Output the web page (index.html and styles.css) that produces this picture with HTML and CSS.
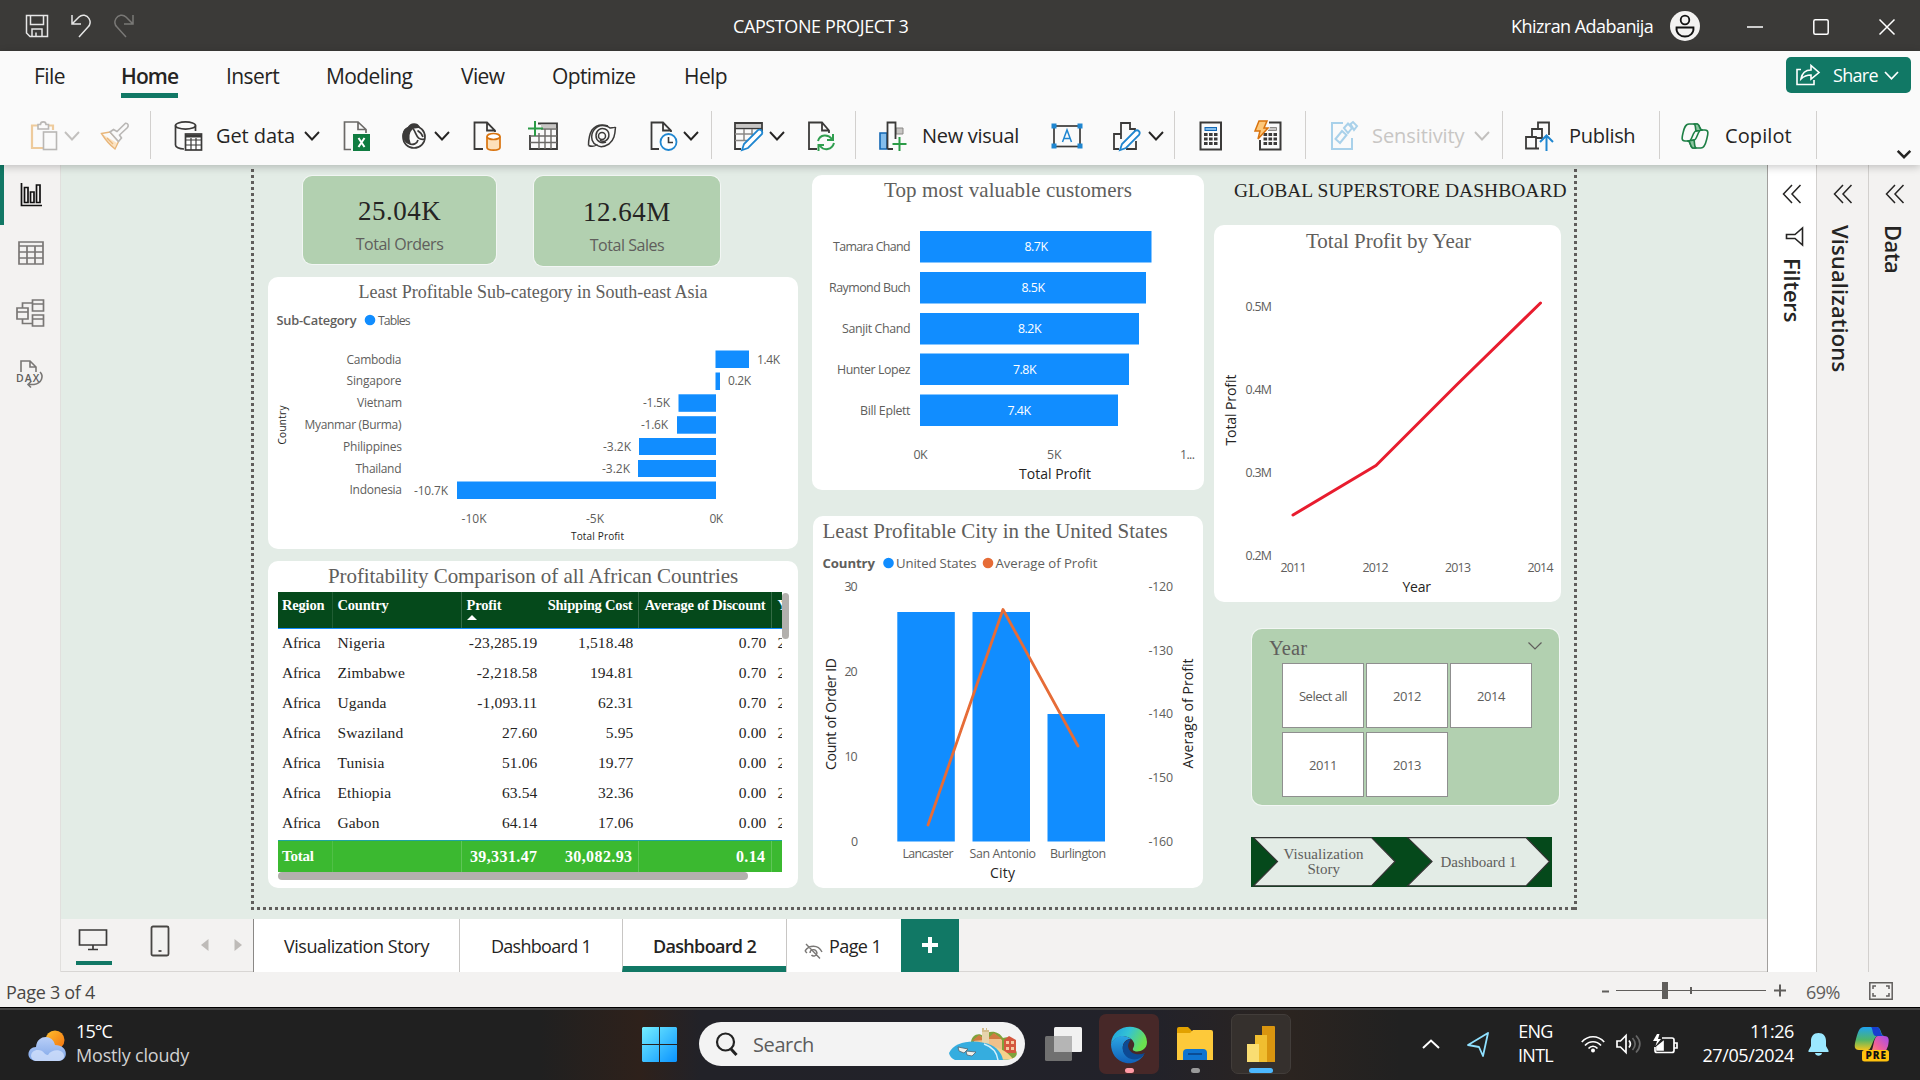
FILE: index.html
```html
<!DOCTYPE html>
<html lang="en">
<head>
<meta charset="utf-8">
<title>CAPSTONE PROJECT 3</title>
<link rel="stylesheet" href="styles.css">
</head>
<body>
<header class="titlebar">
  <div class="quick">
    <svg width="24" height="24" viewBox="0 0 24 24" fill="none" stroke="#e6e6e6" stroke-width="1.500"><path d="M1.500 1.500H22.500V22.500H5L1.500 19Z"/><path d="M5.500 1.500V10.500H18.500V1.500M7 22.500V15H17V22.500M11 18.500V22"/></svg>
    <svg width="22" height="24" viewBox="0 0 22 24" fill="none" stroke="#e6e6e6" stroke-width="1.500"><path d="M2 1V10H11M2 10L9 3C12 0 17 1 19 4.500C21 8 20 11 18 13L9 23"/></svg>
    <svg class="dim" width="22" height="24" viewBox="0 0 22 24" fill="none" stroke="#8a8886" stroke-width="1.500"><path d="M20 1V10H11M20 10L13 3C10 0 5 1 3 4.500C1 8 2 11 4 13L13 23"/></svg>
  </div>
  <div class="doc-name">CAPSTONE PROJECT 3</div>
  <div class="user">Khizran Adabanija</div>
  <svg class="avatar" width="30" height="30" viewBox="0 0 30 30"><circle cx="15" cy="15" r="15" fill="#f3f2f1"/><g fill="none" stroke="#111" stroke-width="1.800"><circle cx="15" cy="9" r="4.300"/><path d="M6.500 16.500H23.500C24 22 20 25.500 15 25.500S6 22 6.500 16.500Z"/></g></svg>
  <svg class="win" width="16" height="16" viewBox="0 0 16 16" stroke="#fff" stroke-width="1.500" fill="none"><path d="M0 8H16"/></svg>
  <svg class="win" width="16" height="16" viewBox="0 0 16 16" stroke="#fff" stroke-width="1.500" fill="none"><rect x=".8" y=".8" width="14.400" height="14.400" rx="1.500"/></svg>
  <svg class="win" width="16" height="16" viewBox="0 0 16 16" stroke="#fff" stroke-width="1.500" fill="none"><path d="M.5 .5L15.500 15.500M15.500 .5L.5 15.500"/></svg>
</header>

<section class="ribbon">
  <nav class="menu">
    <a>File</a><a class="active">Home</a><a>Insert</a><a>Modeling</a><a>View</a><a>Optimize</a><a>Help</a>
    <button class="share">
      <svg width="24" height="22" viewBox="0 0 24 22" fill="none" stroke="#fff" stroke-width="1.600"><path d="M5 5.500H1V20.500H18V16"/><path d="M5 15C6 9 10 6 15 6V1.500L23 8.500L15 15V11C11 11 8 12 5 15Z"/></svg>
      <span>Share</span>
      <svg width="15" height="9" viewBox="0 0 15 9" fill="none" stroke="#fff" stroke-width="1.700"><path d="M1 1L7.500 7.800L14 1"/></svg>
    </button>
  </nav>
  <div class="tools">
    <svg class="ic" viewBox="0 0 30 30" fill="none" stroke-width="1.600"><path d="M8 4.500H2V27H13M18 4.500H23V9" stroke="#eecb9c" stroke-width="2.200"/><path d="M8 3.500H10.500C10.500 0 16 0 16 3.500H18.500V8H8Z" stroke="#b9b7b5"/><rect x="13.500" y="11" width="13" height="17.500" stroke="#b9b7b5"/></svg>
    <svg class="chev pale" viewBox="0 0 16 10"><path d="M1 1L8 8.500L15 1"/></svg>
    <svg class="ic" viewBox="0 0 30 30" fill="none"><path d="M2 13L17 22L14.500 27.500Z" fill="#fbe3c3"/><path d="M1.500 12.500L10 11L18.500 20.500L15 28C10 24 5 18 1.500 12.500ZM7 17L13 23" stroke="#e9b679" stroke-width="1.400"/><path d="M10 11L13.500 8.500L17 10.500L25.500 2.200C28 2 29 4.500 27.500 6.500L19.500 14L21.500 17L18.500 20.500Z" fill="#fafafa" stroke="#b9b7b5" stroke-width="1.600"/></svg>
    <i class="sep"></i>
    <svg class="ic" viewBox="0 0 30 30" fill="none" stroke="#3b3a39" stroke-width="1.700"><ellipse cx="13.500" cy="4.500" rx="10" ry="3.600"/><path d="M3.500 4.500V24C3.500 26 7 28 12 28M23.500 4.500V10"/><rect x="13.500" y="13" width="16" height="16" fill="#fff"/><path d="M13.500 15H29.500" stroke-width="3"/><path d="M13.500 19H29.500M13.500 24H29.500M19 17V29M24 17V29" stroke-width="1.200"/></svg>
    <span class="ls0">Get data</span>
    <svg class="chev" viewBox="0 0 16 10"><path d="M1 1L8 8.500L15 1"/></svg>
    <svg class="ic" viewBox="0 0 30 30" fill="none"><path d="M9 28.500H2.500V1H16L24 8.500V12M16 1V8.500H24" stroke="#6b6967" stroke-width="1.700"/><rect x="11" y="13" width="17" height="17" fill="#107c41"/><path d="M16.500 17L22.500 26M22.500 17L16.500 26" stroke="#fff" stroke-width="2"/></svg>
    <svg class="ic" viewBox="0 0 30 30" fill="none" stroke="#3b3a39" stroke-width="1.700"><circle cx="15" cy="16" r="11"/><path d="M9.500 6.500C12 2 18 2 20 6L13.500 7C9.500 11 8.500 17 11 23C6.500 22 4 17 4.500 12.500C5 9.500 7 7.500 9.500 6.500Z" fill="#3b3a39"/><path d="M13.500 7C18 12 17 20 26 18M11 23C14 24 18 23 19 19M18.500 9.500C21 11 23 13 24 16"/></svg>
    <svg class="chev" viewBox="0 0 16 10"><path d="M1 1L8 8.500L15 1"/></svg>
    <svg class="ic" viewBox="0 0 30 30" fill="none"><path d="M11 28H2.500V1.500H15L23 9.500V11M15 1.500V9.500H23" stroke="#3b3a39" stroke-width="1.800"/><path d="M15 15.500V26.500C15 30 28 30 28 26.500V15.500" fill="#fde0b8" stroke="#d9730d" stroke-width="1.700"/><ellipse cx="21.500" cy="15.500" rx="6.500" ry="3" fill="#fff" stroke="#d9730d" stroke-width="1.700"/></svg>
    <svg class="ic" viewBox="0 0 30 30" fill="none"><path d="M10 2.500H29V28H2V14" stroke="#3b3a39" stroke-width="1.800"/><path d="M13 3.500H28V7H13Z" fill="#c8c6c4"/><path d="M13 8H29M2 15H29M2 21.500H29M11 12V28M17 8V28M23 8V28" stroke="#6b6967" stroke-width="1.400"/><path d="M7 0V15M0 7.500H15" stroke="#2b9b46" stroke-width="2"/></svg>
    <svg class="ic" viewBox="0 0 30 30" fill="none" stroke="#3b3a39" stroke-width="1.500"><circle cx="15" cy="15" r="3.500"/><path d="M19 21C14 23 9 20 9 14.500C9 9 14 6.500 18 8C23 10 23 17 19 19.500C17.500 20.500 14.500 20.500 13 19"/><path d="M1.500 24.500C5 26 8 25 9.500 24C5 22 4 17 5 13C7 6 13 3.500 19 5C21 5.500 22 6 23 7C25 6.500 27 7 28.500 6"/><path d="M28.500 6C28 14 27 19 22 23C17 26 12 26 9.500 24M1.500 24.500C1.500 19 2 14 5 9C9 4 15 3 21 5"/></svg>
    <svg class="ic" viewBox="0 0 30 30" fill="none"><path d="M11 28H3.500V1.500H15L23 9.500V11M15 1.500V9.500H23" stroke="#3b3a39" stroke-width="1.800"/><circle cx="20.500" cy="21" r="8" fill="#fff" stroke="#1f86d0" stroke-width="1.800"/><path d="M20.500 16V21.500H25" stroke="#3b3a39" stroke-width="1.600"/></svg>
    <svg class="chev" viewBox="0 0 16 10"><path d="M1 1L8 8.500L15 1"/></svg>
    <i class="sep"></i>
    <svg class="ic" viewBox="0 0 30 30" fill="none"><path d="M8 28H2V2H29V12" stroke="#3b3a39" stroke-width="1.800"/><path d="M3 3H28V6.500H3Z" fill="#c8c6c4"/><path d="M2 7.500H29" stroke="#3b3a39" stroke-width="1.500"/><path d="M2 13H20M2 19.500H14M11 8V20M19 8V14" stroke="#8a8886" stroke-width="1.500"/><path d="M9 29L11 23L25 9C28 8 30 10 29 13L15 27Z" fill="#fff" stroke="#1f86d0" stroke-width="1.800"/></svg>
    <svg class="chev" viewBox="0 0 16 10"><path d="M1 1L8 8.500L15 1"/></svg>
    <svg class="ic" viewBox="0 0 30 30" fill="none"><path d="M10 28H2V1.500H15L22 9.500V12M15 1.500V9.500H22" stroke="#3b3a39" stroke-width="1.800"/><path d="M11 20C13 13 21 13 25 18M26 13V19H20M27 22C25 29 17 30 13 25M11.500 30V24H17" stroke="#2f9e4f" stroke-width="2"/></svg>
    <i class="sep"></i>
    <svg class="ic" viewBox="0 0 30 30" fill="none"><path d="M2 12H9V28H2Z" fill="#83bdec" stroke="#1267b4" stroke-width="1.600"/><path d="M18 7H25V13H18Z" fill="#c8c6c4" stroke="#8a8886"/><path d="M9.500 28V1.500H17.500V18M9.500 28H15" stroke="#3b3a39" stroke-width="1.800"/><path d="M21.500 16V30M14.500 23H28.500" stroke="#2b9b46" stroke-width="2"/></svg>
    <span>New visual</span>
    <svg class="ic wide" viewBox="0 0 32 30" fill="none"><rect x="3" y="5" width="26" height="20.500" stroke="#3b3a39" stroke-width="1.700"/><path d="M11.500 21L16 9L20.500 21M13 17.500H19" stroke="#1f86d0" stroke-width="1.500"/><path d="M.5 2.500H5.500V7.500H.5ZM26.500 2.500H31.500V7.500H26.500ZM.5 22.500H5.500V27.500H.5ZM26.500 22.500H31.500V27.500H26.500Z" fill="#1f86d0"/></svg>
    <svg class="ic" viewBox="0 0 30 30" fill="none"><path d="M7 28H2V13H9M9 18V2H18V9M18 8H23V11M24 20V28H14" stroke="#3b3a39" stroke-width="1.800"/><path d="M8 29L10 23L23 10C26 8 29 11 27 14L14 27Z" fill="#fff" stroke="#1f86d0" stroke-width="1.800"/></svg>
    <svg class="chev" viewBox="0 0 16 10"><path d="M1 1L8 8.500L15 1"/></svg>
    <i class="sep"></i>
    <svg class="ic" viewBox="0 0 30 30" fill="none"><rect x="2.500" y="1.500" width="20.500" height="27" stroke="#3b3a39" stroke-width="2"/><rect x="7" y="6.500" width="11.500" height="3" fill="#83bdec" stroke="#1267b4"/><path d="M6 13.500H19.500M6 18H19.500M6 22.500H19.500" stroke="#3b3a39" stroke-width="3" stroke-dasharray="3.600 1.400"/></svg>
    <svg class="ic" viewBox="0 0 30 30" fill="none"><path d="M15 1.500H26.500V28.500H6V19" stroke="#3b3a39" stroke-width="2"/><path d="M16 6.500H22.500V9.500H14" fill="#c8c6c4" stroke="#8a8886"/><path d="M9.500 13.500H23M9.500 18H23M9.500 22.500H23" stroke="#3b3a39" stroke-width="3" stroke-dasharray="3.600 1.400"/><path d="M5 0H13L10 7H14L4 18L6 10H1Z" fill="#fdc87a" stroke="#d9730d" stroke-width="1.500"/></svg>
    <i class="sep"></i>
    <svg class="ic" viewBox="0 0 30 30" fill="none" stroke="#a9d1ea" stroke-width="2"><path d="M14 2H3V28H23V17"/><path d="M6.500 18L13 10L17.500 14L11 22Z"/><path d="M15 7L19 2.500L23 7L19 12ZM21.500 3L24 1L28 5L25 9Z"/></svg>
    <span class="off ls0">Sensitivity</span>
    <svg class="chev pale" viewBox="0 0 16 10"><path d="M1 1L8 8.500L15 1"/></svg>
    <i class="sep"></i>
    <svg class="ic" viewBox="0 0 30 30" fill="none" stroke="#3b3a39" stroke-width="1.800"><path d="M15 27.500H2V16H12V27M8 16V8H18V17H12M14 8V1.500H25V14"/><path d="M22.500 30V15M16 21L22.500 14.500L29 21" stroke="#1f86d0" stroke-width="2"/></svg>
    <span>Publish</span>
    <i class="sep"></i>
    <svg class="ic" viewBox="0 0 30 30" fill="none" stroke="#1d7f45" stroke-width="1.600" stroke-linejoin="round"><path d="M9 3H17C20 3 19 9 22 9L16 10C13 10 12 20 9 20H5C1 20 2 16 3 12C4 8 5 3 9 3Z"/><path d="M14 3H17C20 3 19 9 22 9L16 10C15 6 16 4 14 3Z" fill="#8cc7a1"/><path d="M21 27H13C10 27 11 20 8 20L14 19C17 19 18 9 21 9H25C29 9 28 13 27 17C26 21 25 27 21 27Z"/><path d="M16 27H13C10 27 11 20 8 20L14 19C15 23 14 26 16 27Z" fill="#8cc7a1"/></svg>
    <span class="lsp">Copilot</span>
    <i class="sep"></i>
    <svg class="chev collapse" viewBox="0 0 16 10"><path d="M1 1L8 8L15 1"/></svg>
  </div>
</section>

<main class="work">
  <aside class="rail">
    <svg class="on" width="22" height="24" viewBox="0 0 22 24" fill="none" stroke="#111" stroke-width="1.700"><path d="M1.500 0V22.500H22M4.500 4.500H8V19.500H4.500ZM10.500 9H14V19.500H10.500ZM16.500 2H20V19.500H16.500Z"/></svg>
    <svg width="26" height="24" viewBox="0 0 26 24" fill="none" stroke="#797775" stroke-width="1.700"><path d="M1 1H25V23H1ZM1 5H25M1 11H25M1 17H25M9 5V23M17 5V23"/></svg>
    <svg width="29" height="28" viewBox="0 0 29 28" fill="none" stroke="#797775" stroke-width="1.700"><path d="M16.500 1H27.500V12H16.500ZM16.500 5H27.500M1 9H12V20H1ZM1 13H12M16.500 16H27.500V27H16.500ZM16.500 20H27.500M6.500 9V4H16.500M6.500 20V24.500H16.500"/></svg>
    <svg class="dax" width="28" height="28" viewBox="0 0 28 28" fill="none" stroke="#797775" stroke-width="1.600"><path d="M5 12V1H14L20 7V12M14 1V7H20M24 12C28 16 26 23 18 24.500H12M15 21.500L12 24.500L15 27.500"/><text x="0" y="22" font-size="10.500" font-weight="600" stroke="none" fill="#605e5c" textLength="23">DAX</text></svg>
  </aside>

  <div class="canvas">
    <div class="page">
      <div class="col-a">
        <div class="kpis">
          <div class="kpi one"><b>25.04K</b><span>Total Orders</span></div>
          <div class="kpi two"><b>12.64M</b><span>Total Sales</span></div>
        </div>
        <section class="card asia">
          <h2>Least Profitable Sub-category in South-east Asia</h2>
          <svg width="530" height="240" viewBox="268 309 530 240" class="chart">
            <text x="276.500" y="324.500" font-size="12.800" font-weight="600" textLength="80">Sub-Category</text>
            <circle cx="370" cy="320" r="5.300" fill="#118dff"/><text x="378" y="324.500" font-size="12.300" textLength="32.500">Tables</text>
            <g font-size="12">
              <text x="346.500" y="364" textLength="55">Cambodia</text><text x="346.500" y="385" textLength="55">Singapore</text><text x="357" y="407" textLength="45">Vietnam</text><text x="304.500" y="429" textLength="97">Myanmar (Burma)</text><text x="343" y="451" textLength="59">Philippines</text><text x="355.500" y="473" textLength="46">Thailand</text><text x="349.500" y="494" textLength="52.500">Indonesia</text>
              <text x="757" y="364" textLength="23">1.4K</text><text x="728" y="385" textLength="23">0.2K</text><text x="643" y="407" textLength="27">-1.5K</text><text x="641" y="429" textLength="27">-1.6K</text><text x="603" y="451" textLength="28">-3.2K</text><text x="602" y="473" textLength="28">-3.2K</text><text x="414" y="494.500" textLength="34">-10.7K</text>
              <text x="461.500" y="523" textLength="25">-10K</text><text x="586" y="523" textLength="18">-5K</text><text x="709.500" y="523" textLength="13.500">0K</text>
            </g>
            <g fill="#118dff"><rect x="715.500" y="350.500" width="33.500" height="17.500"/><rect x="715.500" y="372.500" width="4.500" height="17.500"/><rect x="678.500" y="394.300" width="37.500" height="17.500"/><rect x="677" y="416.200" width="39" height="17.500"/><rect x="639" y="438" width="77" height="17"/><rect x="638" y="460" width="78" height="17"/><rect x="457" y="481.500" width="259" height="17.500"/></g>
            <g class="axis" font-size="10"><text x="571" y="540" textLength="53">Total Profit</text><text transform="translate(286 444.500) rotate(-90)" textLength="39">Country</text></g>
          </svg>
        </section>
        <section class="card africa">
          <h2>Profitability Comparison of all African Countries</h2>
          <div class="grid">
            <div class="tbl">
              <div class="tr th"><span>Region</span><span>Country</span><span class="sort">Profit</span><span>Shipping Cost</span><span>Average of Discount</span><span>Year</span></div>
              <div class="tr"><span>Africa</span><span>Nigeria</span><span>-23,285.19</span><span>1,518.48</span><span>0.70</span><span>2011</span></div>
              <div class="tr"><span>Africa</span><span>Zimbabwe</span><span>-2,218.58</span><span>194.81</span><span>0.70</span><span>2011</span></div>
              <div class="tr"><span>Africa</span><span>Uganda</span><span>-1,093.11</span><span>62.31</span><span>0.70</span><span>2011</span></div>
              <div class="tr"><span>Africa</span><span>Swaziland</span><span>27.60</span><span>5.95</span><span>0.00</span><span>2011</span></div>
              <div class="tr"><span>Africa</span><span>Tunisia</span><span>51.06</span><span>19.77</span><span>0.00</span><span>2011</span></div>
              <div class="tr"><span>Africa</span><span>Ethiopia</span><span>63.54</span><span>32.36</span><span>0.00</span><span>2011</span></div>
              <div class="tr"><span>Africa</span><span>Gabon</span><span>64.14</span><span>17.06</span><span>0.00</span><span>2011</span></div>
              <div class="tr total"><span>Total</span><span></span><span>39,331.47</span><span>30,082.93</span><span>0.14</span><span></span></div>
            </div>
            <i class="vbar"></i>
          </div>
          <i class="hbar"></i>
        </section>
      </div>

      <div class="col-b">
        <section class="card top">
          <h2>Top most valuable customers</h2>
          <svg width="392" height="281" viewBox="812 209 392 281" class="chart">
            <g fill="#118dff"><rect x="920" y="231" width="231.500" height="31.500"/><rect x="920" y="272" width="226" height="31.500"/><rect x="920" y="313" width="219" height="31.500"/><rect x="920" y="353.500" width="209" height="31.500"/><rect x="920" y="394.500" width="198" height="31.500"/></g>
            <g font-size="12.400"><text x="833" y="251" textLength="77.500">Tamara Chand</text><text x="829" y="292" textLength="81.500">Raymond Buch</text><text x="842" y="333" textLength="68.500">Sanjit Chand</text><text x="837" y="374" textLength="73.500">Hunter Lopez</text><text x="860" y="415" textLength="50.500">Bill Eplett</text>
            <text x="913.500" y="459" textLength="14">0K</text><text x="1047" y="459" textLength="14.500">5K</text><text x="1180" y="459" textLength="15">1...</text></g>
            <g font-size="12.400" class="inbar"><text x="1024.500" y="251" textLength="23.500">8.7K</text><text x="1021.500" y="292" textLength="23.500">8.5K</text><text x="1018" y="333" textLength="23.500">8.2K</text><text x="1013" y="374" textLength="23.500">7.8K</text><text x="1007.500" y="415" textLength="23.500">7.4K</text></g>
            <text class="axis" x="1019" y="479" font-size="14" textLength="72">Total Profit</text>
          </svg>
        </section>
        <section class="card usa">
          <h2>Least Profitable City in the United States</h2>
          <svg width="390" height="338" viewBox="813 550 390 338" class="chart">
            <g font-size="13.600"><text x="822.500" y="568" font-weight="700" font-size="13.200" textLength="52.500">Country</text><text x="896" y="568" font-size="13.200" textLength="80.500">United States</text><text x="995.500" y="568" font-size="13.200" textLength="102">Average of Profit</text></g>
            <circle cx="888.500" cy="563" r="5.300" fill="#118dff"/><circle cx="988" cy="563" r="5.300" fill="#e66c37"/>
            <g fill="#118dff"><rect x="897.300" y="612" width="57.500" height="229.500"/><rect x="972.500" y="612" width="57.500" height="229.500"/><rect x="1047.500" y="714" width="57.500" height="127.500"/></g>
            <g font-size="12.400"><text x="844.500" y="591" textLength="13">30</text><text x="844.500" y="676" textLength="13">20</text><text x="844.500" y="761" textLength="13">10</text><text x="851" y="846" textLength="6.500">0</text>
            <text x="1148.500" y="591" textLength="24.500">-120</text><text x="1148.500" y="655" textLength="24.500">-130</text><text x="1148.500" y="718" textLength="24.500">-140</text><text x="1148.500" y="782" textLength="24.500">-150</text><text x="1148.500" y="846" textLength="24.500">-160</text>
            <text x="902.500" y="858" textLength="51">Lancaster</text><text x="969.500" y="858" textLength="66.500">San Antonio</text><text x="1050" y="858" textLength="56">Burlington</text></g>
            <path d="M928 825L1003 609.500L1078 746" fill="none" stroke="#e66c37" stroke-width="2.800" stroke-linejoin="round" stroke-linecap="round"/>
            <g class="axis" font-size="14"><text x="990" y="878" textLength="25">City</text><text transform="translate(836 770) rotate(-90)" textLength="112">Count of Order ID</text><text transform="translate(1193 768.500) rotate(-90)" textLength="110">Average of Profit</text></g>
          </svg>
        </section>
      </div>

      <div class="col-c">
        <h1>GLOBAL SUPERSTORE DASHBOARD</h1>
        <section class="card year">
          <h2>Total Profit by Year</h2>
          <svg width="347" height="343" viewBox="1214 259 347 343" class="chart">
            <g font-size="12.400"><text x="1245.500" y="311" textLength="26.500">0.5M</text><text x="1245.500" y="394" textLength="26.500">0.4M</text><text x="1245.500" y="477" textLength="26.500">0.3M</text><text x="1245.500" y="560" textLength="26.500">0.2M</text>
            <text x="1280.500" y="572" textLength="26">2011</text><text x="1362.500" y="572" textLength="26">2012</text><text x="1445" y="572" textLength="26">2013</text><text x="1527.500" y="572" textLength="26">2014</text></g>
            <path d="M1293 515L1376 465.500L1457.500 384L1540.500 303" fill="none" stroke="#e81c2e" stroke-width="3" stroke-linejoin="round" stroke-linecap="round"/>
            <g class="axis" font-size="14"><text x="1402.500" y="592" textLength="28.500">Year</text><text transform="translate(1236 445.500) rotate(-90)" textLength="71">Total Profit</text></g>
          </svg>
        </section>
        <section class="slicer">
          <div class="head"><span>Year</span><svg width="14" height="8" viewBox="0 0 14 8" fill="none" stroke="#605e5c" stroke-width="1.200"><path d="M.5 .5L7 7L13.500 .5"/></svg></div>
          <div class="opts"><span class="ls-t">Select all</span><span>2012</span><span>2014</span><span>2011</span><span>2013</span></div>
        </section>
        <svg class="navi" width="301" height="50" viewBox="1251 837 301 50">
          <rect x="1251" y="837" width="301" height="50" fill="#05491b"/>
          <g fill="#e3ece6" stroke="#333" stroke-width="1.200"><path d="M1253.500 837.600H1371.500L1395 861.500L1371.500 885.800H1253.500L1277.500 861.500Z"/><path d="M1407.500 837.600H1526L1549.500 861.500L1526 885.800H1407.500L1432 861.500Z"/></g>
          <g font-size="15" fill="#605e5c"><text x="1283.500" y="859" textLength="80">Visualization</text><text x="1307.500" y="874" textLength="32.500">Story</text><text x="1440.500" y="866.500" textLength="76">Dashboard 1</text></g>
        </svg>
      </div>
    </div>
  </div>

  <footer class="pages">
    <svg class="mode cur" width="30" height="22" viewBox="0 0 30 22" fill="none" stroke="#3b3a39" stroke-width="1.700"><path d="M1.500 1H28.500V16H1.500ZM15 16V20.500M10 20.500H20"/></svg>
    <svg class="mode" width="20" height="32" viewBox="0 0 20 32" fill="none" stroke="#484644" stroke-width="1.800"><rect x="1.500" y="1.500" width="17" height="29" rx="1.500"/><path d="M8.500 26H11.500"/></svg>
    <svg class="tri" width="8" height="12" viewBox="0 0 8 12" fill="#bebbb8"><path d="M7.500 0V12L0 6Z"/></svg>
    <svg class="tri" width="8" height="12" viewBox="0 0 8 12" fill="#bebbb8"><path d="M.5 0V12L8 6Z"/></svg>
    <div class="tab t1">Visualization Story</div><div class="tab t2">Dashboard 1</div><div class="tab t3">Dashboard 2</div>
    <div class="tab t4"><svg width="19" height="17" viewBox="0 0 19 17" fill="none" stroke="#797775" stroke-width="1.400"><path d="M1 9C5 3 14 2 18 10M2 2L16 16.500M6 11C6 7 12 6 13 11C13 14 9 15 7.500 13M1 9L3 11"/></svg>Page 1</div>
    <div class="add"><svg width="16" height="16" viewBox="0 0 16 16" stroke="#fff" stroke-width="4"><path d="M8 0V16M0 8H16"/></svg></div>
  </footer>

  <aside class="pane filters"><svg class="dbl" viewBox="0 0 20 20"><path d="M10 1L1.500 10L10 19M18.500 1L10 10L18.500 19"/></svg>
    <svg class="funnel" width="19" height="19" viewBox="0 0 19 19" fill="none" stroke="#252423" stroke-width="1.600"><path d="M17.500 1V18L10 11.500H1.500V7.500H10Z"/></svg><span>Filters</span></aside>
  <aside class="pane vis"><svg class="dbl" viewBox="0 0 20 20"><path d="M10 1L1.500 10L10 19M18.500 1L10 10L18.500 19"/></svg><span>Visualizations</span></aside>
  <aside class="pane data"><svg class="dbl" viewBox="0 0 20 20"><path d="M10 1L1.500 10L10 19M18.500 1L10 10L18.500 19"/></svg><span>Data</span></aside>
</main>

<div class="status">
  <span class="where">Page 3 of 4</span>
  <svg width="186" height="20" viewBox="1601 981 186 20" stroke="#605e5c" fill="none"><path d="M1602 991.500H1609M1774 990.500H1786M1780 984.500V996.500" stroke-width="2"/><path d="M1616 990.500H1766"/><path d="M1665 982V999" stroke-width="6"/><path d="M1691 987V994" stroke-width="2"/></svg>
  <span class="pct">69%</span>
  <svg width="24" height="18" viewBox="0 0 24 18" stroke="#605e5c" fill="none" stroke-width="1.500"><path d="M.8 .8H23.200V17.200H.8ZM4 7V4H7M17 4H20V7M20 11V14H17M7 14H4V11"/></svg>
</div>

<div class="taskbar">
  <svg class="weather" width="38" height="32" viewBox="0 0 38 32"><defs><linearGradient id="sun" x1="0" y1="0" x2="1" y2="1"><stop offset="0" stop-color="#ffc02e"/><stop offset="1" stop-color="#f2700f"/></linearGradient><linearGradient id="cl" x1="0" y1="0" x2="0" y2="1"><stop offset="0" stop-color="#b9cff8"/><stop offset="1" stop-color="#7fa6e8"/></linearGradient></defs><circle cx="27" cy="10" r="9.500" fill="url(#sun)"/><path d="M8 31C-3 30 -1 17 8 17C9 4 25 4 27 15C41 15 41 31 30 31Z" fill="url(#cl)"/><path d="M9 31C1 31 1 20 10 20C16 20 16 25 20 25C24 18 37 19 36 27C35 31 31 31 30 31Z" fill="#d6e3fc" opacity=".75"/></svg>
  <div class="wtext"><div>15°C</div><div class="soft">Mostly cloudy</div></div>
  <svg class="start" width="35" height="35" viewBox="0 0 35 35"><defs><linearGradient id="w" x1="0" y1="0" x2="1" y2="1"><stop offset="0" stop-color="#74efff"/><stop offset="1" stop-color="#0a93ff"/></linearGradient></defs><path d="M1 0H17V17H0V1ZM18 0H34L35 1V17H18ZM0 18H17V35H1L0 34ZM18 18H35V34L34 35H18Z" fill="url(#w)"/></svg>
  <div class="search">
    <svg width="24" height="24" viewBox="0 0 24 24" fill="none" stroke="#222" stroke-width="2.200"><circle cx="10.500" cy="10" r="8.500"/><path d="M16 17L21.500 23" stroke-width="3"/></svg>
    <span>Search</span>
    <svg class="bay" width="70" height="34" viewBox="0 0 70 34"><path d="M22 16C22 8 30 5 34 9C40 2 50 4 54 11C62 8 68 14 66 22C72 30 62 34 50 32L20 24Z" fill="#7fa23a"/><path d="M25 14L31 9L37 14V22H25ZM39 12L46 7L53 13V23H39Z" fill="#efc08a"/><path d="M23 14L30 8L36 13ZM38 12L45 6L53 12Z" fill="#d07a42"/><path d="M33 3H40V19H33Z" fill="#e6d4ad"/><path d="M33 1H35V3H37V1H38V3H40V5H33Z" fill="#d4bd8d"/><path d="M55 13L60 9L67 13V26H55Z" fill="#d4573e"/><path d="M57 14H60V17H57ZM62 14H65V17H62ZM57 20H60V23H57ZM62 20H65V23H62Z" fill="#f6c9a0"/><path d="M38 19C48 19 58 24 64 32H42Z" fill="#f4d28c"/><path d="M0 26C6 13 28 12 42 18C50 22 53 28 54 33H6Q1 31 0 26Z" fill="#35addf"/><path d="M35 17C44 20 48 26 49 33" stroke="#d2f0fb" stroke-width="1.500" fill="none"/><path d="M9 20L19 22L15 26L10 24ZM17 24L27 25L23 29L18 28Z" fill="#f1efe9" stroke="#4d6673" stroke-width=".8"/></svg>
  </div>
  <svg class="tv" width="37" height="35" viewBox="0 0 37 35"><rect x="9" y="0" width="28" height="25" rx="1.500" fill="#f1f1f1"/><rect x="0" y="9" width="27" height="25" rx="1.500" fill="#707070"/><path d="M9 9H27V25H9Z" fill="#b5b5b5"/></svg>
  <div class="tile red"><svg width="36" height="36" viewBox="0 0 36 36"><defs><linearGradient id="e1" x1="0" y1="0" x2="1" y2=".4"><stop offset="0" stop-color="#1b9de2"/><stop offset=".5" stop-color="#34c3d4"/><stop offset="1" stop-color="#6be04f"/></linearGradient><linearGradient id="e2" x1="0" y1="0" x2="0" y2="1"><stop offset="0" stop-color="#2ba6e4"/><stop offset="1" stop-color="#1160b8"/></linearGradient></defs><path d="M0 17C1 -5 35 -6 36 15C36 25 24 26 22 23C21 21 24 20 23 16C20 8 6 6 0 17Z" fill="url(#e1)"/><path d="M0 17C4 8 14 7 20 12C13 12 11 18 12 23C14 31 24 33 33 28C28 35 21 37 15 36C5 34 0 26 0 17Z" fill="url(#e2)"/><path d="M20 12C13 13 11 18 12 24C14 32 24 35 31 30L34 26C27 29 18 27 17 19C17 16 19 14 20 12Z" fill="#0d4a94"/></svg><i class="pink"></i></div>
  <div class="tile"><svg width="36" height="34" viewBox="0 0 36 34"><path d="M0 2Q0 0 2 0H11L15 4V9H0Z" fill="#e2a100"/><path d="M0 6H13L16 3H34Q36 3 36 5V33H0Z" fill="#fdc93a"/><path d="M6 33V26Q6 22 10 22H26Q30 22 30 26V33Z" fill="#0f74cf"/><path d="M11 27H25" stroke="#0a4c94" stroke-width="2"/></svg><i></i></div>
  <div class="tile lit"><svg width="28" height="36" viewBox="0 0 28 36"><path d="M15 0H27Q28 0 28 1V36H15Z" fill="#d9950f"/><path d="M8 9H20V36H8Z" fill="#f0be30"/><path d="M0 18H12V36H0Z" fill="#f9dd72"/></svg><i class="blue"></i></div>
  <svg class="t-up" width="18" height="10" viewBox="0 0 18 10" fill="none" stroke="#fff" stroke-width="2"><path d="M1 9L9 1.500L17 9"/></svg>
  <svg class="t-loc" width="22" height="25" viewBox="0 0 22 25" fill="none" stroke="#8fe0ff" stroke-width="1.800" stroke-linejoin="round"><path d="M21 1L1 13L12 15L16 24Z"/></svg>
  <div class="lang"><div>ENG</div><div>INTL</div></div>
  <svg class="t-wifi" width="24" height="18" viewBox="0 0 24 18" fill="none" stroke="#fff" stroke-width="1.700"><path d="M.8 7C7 0 17 0 23.200 7M4 10.500C8.500 5.500 15.500 5.500 20 10.500M7.500 13.500C10 10.500 14 10.500 16.500 13.500"/><circle cx="12" cy="15.500" r="2" fill="#fff" stroke="none"/></svg>
  <svg class="t-vol" width="26" height="20" viewBox="0 0 26 20" fill="none" stroke="#fff" stroke-width="1.700"><path d="M1 7H4.500L10 1.500V18.500L4.500 13H1ZM13 6.500C15 9 15 11 13 13.500"/><path d="M16.500 4C20 8 20 12 16.500 16M20 1.500C25 7 25 13 20 18.500" stroke="#666"/></svg>
  <svg class="t-bat" width="25" height="20" viewBox="0 0 25 20" fill="none" stroke="#fff" stroke-width="1.700"><path d="M9 4H19Q21 4 21 6V16.500Q21 18.500 19 18.500H4Q2 18.500 2 16.500V13M21.500 9H24V14H21.500"/><path d="M4 13L10 8V16H4Z" fill="#fff"/><path d="M4 0L0 7H4L2.500 12L8 5H5L6.500 0Z" fill="#fff" stroke="none"/></svg>
  <div class="clock"><div>11:26</div><div>27/05/2024</div></div>
  <svg class="t-bell" width="21" height="23" viewBox="0 0 21 23" fill="#9be8ff"><path d="M10.500 0C15.500 0 18 3.500 18 8V13L20.500 17.500V19H.5V17.500L3 13V8C3 3.500 5.500 0 10.500 0ZM7 20H14C13.500 23.500 7.500 23.500 7 20Z"/></svg>
  <svg class="t-cop" width="36" height="36" viewBox="0 0 36 36"><defs><linearGradient id="c1" x1="0" y1="0" x2="0" y2="1"><stop offset="0" stop-color="#1fa2f0"/><stop offset=".55" stop-color="#4fb56a"/><stop offset="1" stop-color="#f3c51d"/></linearGradient><linearGradient id="c2" x1="1" y1="0" x2="0" y2="1"><stop offset="0" stop-color="#a34bf0"/><stop offset=".6" stop-color="#f0609a"/><stop offset="1" stop-color="#ff9a52"/></linearGradient></defs><path d="M10 1H23C27 1 27 10 30 10H24C19 10 18 24 14 24H5C0 24 0 20 2 13C4 6 5 1 10 1Z" fill="url(#c1)"/><path d="M17 1H23C27 1 26 10 30 10H22C18 10 19 2 17 1Z" fill="#173ed0"/><path d="M24 10H30C36 10 35 15 34 20L31 27H16C20 25 19 10 24 10Z" fill="url(#c2)"/><rect x="8" y="24" width="27" height="11.500" rx="2.500" fill="#ffc20e"/><text x="21.500" y="33.200" font-size="10" font-weight="800" text-anchor="middle" textLength="20" fill="#111">PRE</text></svg>
</div>
</body>
</html>
```
FILE: styles.css
```css
*{box-sizing:border-box}
body{margin:0;width:1920px;height:1080px;overflow:hidden;font-family:"Open Sans","Noto Sans",sans-serif;letter-spacing:-.025em;color:#252423;background:#f3f2f1}
svg{display:block;flex:none;overflow:visible}
h1,h2{margin:0;font-weight:400;font-family:"Liberation Serif",serif}

/* title bar */
.titlebar{height:51px;background:#3b3a38;color:#fff;font-size:18px;display:grid;grid-template-columns:708px 778px 160px 76px 66px 66px 16px;padding-left:25px;align-items:center;line-height:24px}
.quick{display:flex;gap:21px;align-items:center}
.dim{opacity:.8}
.user{letter-spacing:-.55px}
.avatar{margin-left:-1px}
.win{margin-top:3px}

/* ribbon */
.ribbon{height:114px;background:#fafafa;position:relative;z-index:2;box-shadow:0 2px 8px rgba(0,0,0,.22)}
.menu{height:49px;display:grid;grid-template-columns:88px 104px 100px 135px 91px 132px 1102px 125px;padding-left:34px;font-size:21px;letter-spacing:-.6px;line-height:50px}
.menu a{justify-self:start;height:47px}
.menu .active{font-weight:600;letter-spacing:-.9px;border-bottom:5px solid #117865;width:57px;margin-left:-1px}
.share{height:36px;margin-top:6px;border:0;border-radius:5px;background:#117865;color:#fff;display:flex;align-items:center;padding:0 13px 0 10px;font:18px "Open Sans",sans-serif;letter-spacing:-.7px}
.share span{margin:0 6px 0 13px}
.tools{height:65px;padding-left:30px;display:grid;align-items:center;font-size:20px;grid-template-columns:34px 36px 50px 22px 44px 88px 38px 57px 35px 38px 56px 59px 61px 35px 28px 22px 36px 38px 48px 23px 44px 129px 61px 36px 26px 24px 56px 51px 24px 43px 102px 28px 22px 45px 90px 21px 45px 91px 80px 24px}
.tools span{white-space:nowrap;letter-spacing:-.3px;padding-top:6px;line-height:28px}
.tools .ls0{letter-spacing:-.08px}
.tools .lsp{letter-spacing:.1px}
.tools .off{color:#c8c6c4}
.ic{width:30px;height:30px;margin-top:6px}
.ic.wide{width:32px}
.chev{width:16px;height:10px;fill:none;stroke:#252423;stroke-width:1.9;margin-top:7px}
.chev.pale{stroke:#c2c0be}
.chev.collapse{stroke-width:2.8;margin-top:43px;height:9px}
.sep{width:1px;height:48px;background:#d2d0ce;margin-top:5px}

/* work area */
.work{height:807px;display:grid;grid-template-columns:61px 1706px 49px 52px 52px;grid-template-rows:754px 53px}
.rail{grid-row:1/3;background:linear-gradient(#117865,#117865) 0 0/4px 60px no-repeat #f3f2f1;border-right:1px solid #e1dfdd;display:flex;flex-direction:column;align-items:center;padding-left:1px}
.rail .on{margin-top:18px}
.rail svg:nth-child(2){margin-top:34px}
.rail svg:nth-child(3){margin-top:34px}
.rail .dax{margin:33px 2px 0 0}
.pane{grid-row:1/3;background:#f3f2f1;border-left:1px solid #d2d0ce;display:flex;flex-direction:column;align-items:center;padding-top:19px}
.filters{grid-column:3;background:#fff;border-left:1.5px solid #a19f9d}
.vis{grid-column:4}
.data{grid-column:5}
.pane span{writing-mode:vertical-rl;font-weight:600;font-size:22px;letter-spacing:-.2px;line-height:28px;color:#252423}
.vis span,.data span{margin-top:21px}
.vis span{margin-right:3px;letter-spacing:.1px}
.data span{margin-right:2px;letter-spacing:-.5px}
.filters span{margin:12px 0 0 1px}
.dbl{width:20px;height:20px;fill:none;stroke:#252423;stroke-width:1.5}
.funnel{margin:23px 0 0 5px}
.canvas{background:#e3ece6;overflow:hidden;padding-left:190px}

/* report page with its dotted outline */
.page{width:1326px;height:745px;display:grid;grid-template-columns:544px 402px 363px;padding-left:17px;
background:
repeating-linear-gradient(#605e5c 0 3px,transparent 3px 6px) 0 4px/3px 100% no-repeat,
repeating-linear-gradient(#605e5c 0 3px,transparent 3px 6px) 100% 4px/3px 100% no-repeat,
repeating-linear-gradient(90deg,#605e5c 0 3px,transparent 3px 6px) 0 100%/100% 3px no-repeat}
.card{background:#fff;border-radius:10px;overflow:hidden}
.card h2{color:#605e5c;text-align:center;white-space:nowrap}
.chart{font-family:"Open Sans","Noto Sans",sans-serif;letter-spacing:0;fill:#605e5c}
.axis{fill:#252423}
.inbar{fill:#fff}
.kpis{display:flex;padding:11px 0 0 35px;height:112px;align-items:flex-start;gap:38px}
.kpi{background:#b2d0b0;border-radius:9px;box-shadow:0 0 0 1px rgba(255,255,255,.55);display:flex;flex-direction:column;align-items:center;height:88px;width:193px}
.kpi.two{width:186px;height:90px;padding-top:1px}
.kpi b{font:400 27px/32px "Liberation Serif",serif;letter-spacing:.5px;margin-top:19px}
.kpi span{font-size:16px;line-height:22px;color:#605e5c;letter-spacing:-.45px;margin-top:6px}
.asia{width:530px;height:272px}
.asia h2{font-size:18px;line-height:30px;height:32px;letter-spacing:-.03px}
.africa{width:530px;height:327px;margin-top:12px}
.africa h2{font-size:21px;letter-spacing:-.07px;line-height:31px;height:31px}
.grid{display:flex;margin-left:10px}
.tbl{width:504px;overflow:hidden;font:15.5px "Liberation Serif",serif;color:#252423}
.tr{display:grid;grid-template-columns:54.5px 129px 81px 96px 133px 60px;height:30px;line-height:30px;letter-spacing:.15px}
.tr span{padding:0 5px;white-space:nowrap}
.tr span:first-child{padding-left:4px;letter-spacing:-.2px}
.tr span:nth-child(n+3):nth-child(-n+5){text-align:right}
.tr span:last-child{padding-left:6px}
.tr.th{height:37px;background:#05491b;color:#fff;border-bottom:1px solid #118dff;font-weight:700;font-size:14.5px;line-height:26px;margin-bottom:-1px}
.tr.th span{letter-spacing:-.2px}
.tr .sort{text-align:left!important}
.sort::after{content:"";display:block;width:0;border:5px solid transparent;border-bottom-color:#fff;border-top:0;margin-top:-3px}
.th span:nth-child(2),.th span:nth-child(4),.th span:nth-child(5),.total span:nth-child(2),.total span:nth-child(4),.total span:nth-child(5){border-right:1px solid #ffffff30}
.th span:first-child,.total span:first-child{border-right:1px solid #ffffff1c}
.tr.total{height:32px;line-height:31px;background:#3bb930;color:#fff;font-weight:700;font-size:16px;border-top:1px solid #1fa4a0;margin-top:2px}
.total span:nth-child(n){letter-spacing:.4px}
.total span:nth-child(n):first-child{letter-spacing:-.2px;font-size:15px}
.vbar{width:7px;height:46px;background:#b3b0ad;border-radius:3.5px;margin-top:1px}
.hbar{display:block;width:470px;height:8px;border-radius:4px;background:#b3b0ad;margin:0 0 0 10px}
.top{width:392px;height:315px;margin-top:10px}
.top h2{font-size:21px;letter-spacing:.1px;line-height:31px;height:34px}
.usa{width:390px;height:372px;margin:26px 0 0 1px}
.usa h2{font-size:21px;letter-spacing:0;line-height:31px;height:34px;text-align:left;padding-left:9.5px}
h1{font-size:19.5px;letter-spacing:.04px;white-space:nowrap;margin-left:20px;line-height:32px;height:60px;padding-top:10px}
.year{width:347px;height:377px}
.year h2{font-size:21px;letter-spacing:-.02px;line-height:32px;height:34px;padding-left:2px}
.slicer{width:307px;height:176px;margin:27px 0 0 38px;background:#b2d0b0;border-radius:10px;box-shadow:0 0 0 1px rgba(255,255,255,.55)}
.head{height:34px;display:flex;justify-content:space-between;padding:0 17px;font:20.5px/39px "Liberation Serif",serif;letter-spacing:.1px;color:#605e5c}
.head svg{margin-top:13px}
.opts{display:grid;grid-template-columns:82px 82px 82px;column-gap:2px;row-gap:4px;padding-left:30px}
.opts span{height:65px;border:1px solid #8f8f8f;background:#fff;text-align:center;font-size:13px;line-height:64px;color:#605e5c}
.opts .ls-t{letter-spacing:-.5px}
.navi{margin:32px 0 0 37px;font-family:"Liberation Serif",serif;letter-spacing:0}

/* page tabs */
.pages{grid-column:2;grid-row:2;background:linear-gradient(#117865,#117865) 15px 42px/36px 4px no-repeat #f3f2f1;border-bottom:1px solid #d8d6d4;display:flex;align-items:flex-start}
.mode{margin:6px 0 0 42px}
.mode.cur{margin:10px 0 0 17px}
.tri{margin:20px 0 0 31px}
.tri+.tri{margin-left:25px}
.tab{height:53px;background:#fff;border-left:1px solid #c8c6c4;font-size:18px;line-height:55px;text-align:center;letter-spacing:-.44px;white-space:nowrap}
.t1{width:206px;margin-left:11px;border-left-color:#8a8886}
.t2{width:163px;letter-spacing:-.7px}
.t3{width:164px;font-weight:600;letter-spacing:-.67px;border-bottom:6px solid #117865}
.t4{width:115px;display:flex;letter-spacing:-.6px;padding-left:17px}
.t4 svg{margin:23px 6px 0 0}
.add{width:58px;height:53px;background:#117865;padding:18px 0 0 21px}

/* status bar */
.status{height:35px;display:grid;grid-template-columns:1595px 205px 63px 24px;padding-left:6px;align-items:center;font-size:18px;color:#484644;line-height:36px}
.where,.pct{padding-top:2px}
.pct{letter-spacing:-.5px;color:#605e5c}
.where{letter-spacing:-.29px}

/* windows taskbar */
.taskbar{height:73px;border-top:1px solid #000;box-shadow:inset 0 2px 0 #444;background:linear-gradient(90deg,#202020 0,#202020 540px,#2e211b 640px,#222228 700px,#22222a 1150px,#2b2420 1290px,#212121 1400px);display:flex;align-items:center;color:#fff;font-size:18px;line-height:24px}
.weather{margin:3px 0 0 28px}
.wtext{margin-left:10px;width:566px;margin-top:-2px}
.wtext div:first-child{letter-spacing:-.9px}
.wtext .soft{letter-spacing:-.18px;color:#d0d0d0}
.search{margin-left:22px;width:326px;height:44px;border-radius:22px;background:#f3f3f3;color:#5c5c5c;display:flex;align-items:center;padding-left:16px;font-size:20px}
.search span{margin:1px 0 0 14px;width:196px}
.tv{margin-left:20px}
.tile{width:60px;height:60px;border-radius:7px;margin-left:6px;padding-top:13px;display:flex;flex-direction:column;align-items:center}
.tile.red{background:#472828;margin-left:17px}
.tile.lit{background:#35302d;border:1px solid #423d3a;padding-top:11px}
.tile i{width:9px;height:5px;border-radius:3px;background:#9a9a9a;margin-top:7px}
.tile i.pink{background:#ff9aa5;margin-top:5px}
.tile i.blue{width:24px;background:#4cb8ff;margin-top:6px}
.t-up{margin-left:131px}
.t-loc{margin-left:27px}
.lang{margin-left:28px;width:37px;text-align:center;letter-spacing:-.7px}
.t-wifi{margin-left:27px}
.t-vol{margin-left:11px}
.t-bat{margin-left:11px}
.clock{width:116px;text-align:right;letter-spacing:-.4px}
.lang,.clock{margin-top:-2px}
.t-bell{margin-left:14px}
.t-cop{margin-left:25px}
```
